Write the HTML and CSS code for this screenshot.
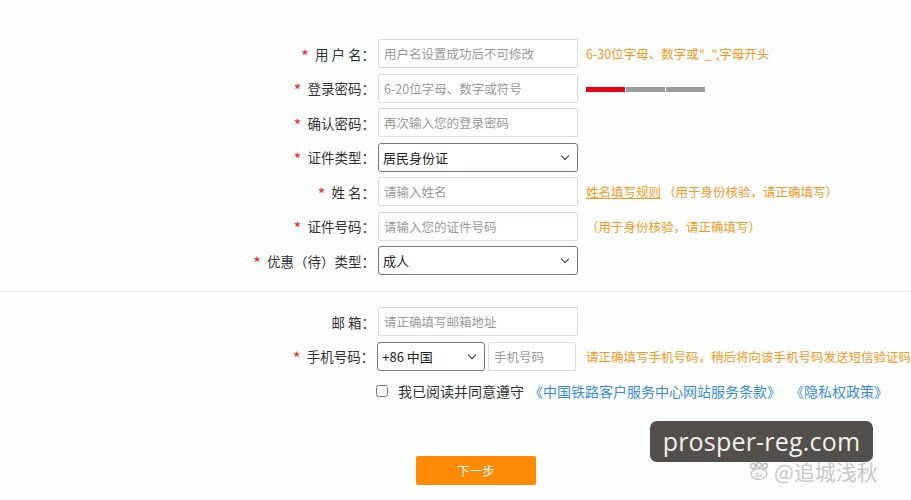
FILE: index.html
```html
<!DOCTYPE html>
<html>
<head>
    <meta charset="utf-8">
    <title>注册</title>
    <link rel="stylesheet" href="styles.css">
</head>
<body>
<div class="page">
    <div class="form-part">
        <div class="form-row">
            <label class="form-label"><span class="req">*</span>用 户 名：</label>
            <input class="form-input" type="text" placeholder="用户名设置成功后不可修改">
            <span class="hint">6-30位字母、数字或"_",字母开头</span>
        </div>
        <div class="form-row">
            <label class="form-label"><span class="req">*</span>登录密码：</label>
            <input class="form-input" type="password" placeholder="6-20位字母、数字或符号">
            <div class="strength">
                <span class="strength-bar on"></span>
                <span class="strength-bar"></span>
                <span class="strength-bar"></span>
            </div>
        </div>
        <div class="form-row">
            <label class="form-label"><span class="req">*</span>确认密码：</label>
            <input class="form-input" type="password" placeholder="再次输入您的登录密码">
        </div>
        <div class="form-row">
            <label class="form-label"><span class="req">*</span>证件类型：</label>
            <div class="select-wrap">
                <select class="form-select">
                    <option>居民身份证</option>
                </select>
            </div>
        </div>
        <div class="form-row">
            <label class="form-label"><span class="req">*</span>姓 名：</label>
            <input class="form-input" type="text" placeholder="请输入姓名">
            <span class="hint"><a class="hint-link" href="#">姓名填写规则</a>（用于身份核验，请正确填写）</span>
        </div>
        <div class="form-row">
            <label class="form-label"><span class="req">*</span>证件号码：</label>
            <input class="form-input" type="text" placeholder="请输入您的证件号码">
            <span class="hint">（用于身份核验，请正确填写）</span>
        </div>
        <div class="form-row">
            <label class="form-label"><span class="req">*</span>优惠（待）类型：</label>
            <div class="select-wrap">
                <select class="form-select">
                    <option>成人</option>
                </select>
            </div>
        </div>
    </div>

    <div class="divider"></div>

    <div class="form-part">
        <div class="form-row">
            <label class="form-label">邮 箱：</label>
            <input class="form-input" type="text" placeholder="请正确填写邮箱地址">
        </div>
        <div class="form-row">
            <label class="form-label"><span class="req">*</span>手机号码：</label>
            <div class="select-wrap select-small">
                <select class="form-select">
                    <option>+86 中国</option>
                </select>
            </div>
            <input class="form-input input-small" type="text" placeholder="手机号码">
            <span class="hint hint-phone">请正确填写手机号码，稍后将向该手机号码发送短信验证码</span>
        </div>
        <div class="agree-row">
            <input class="agree-check" type="checkbox">
            <span class="agree-text">我已阅读并同意遵守</span>
            <a class="agree-link" href="#">《中国铁路客户服务中心网站服务条款》</a>
            <a class="agree-link" href="#">《隐私权政策》</a>
        </div>
    </div>

    <div class="btn-row">
        <button class="next-button">下一步</button>
    </div>

    <div class="watermark">
        <div class="watermark-box">prosper-reg.com</div>
        <div class="watermark-sub">
            <svg width="22" height="18" viewBox="0 0 22 18">
                <circle cx="5" cy="4" r="2.5" fill="none" stroke="#bbb" stroke-width="1.3"/>
                <circle cx="11" cy="2.8" r="2.3" fill="none" stroke="#bbb" stroke-width="1.3"/>
                <circle cx="17" cy="4" r="2.5" fill="none" stroke="#bbb" stroke-width="1.3"/>
                <ellipse cx="11" cy="12" rx="8" ry="5.3" fill="none" stroke="#bbb" stroke-width="1.3"/>
                <text x="6.5" y="14.5" font-size="6.5" fill="#bbb" font-family="Liberation Sans, sans-serif">du</text>
            </svg>
            <span>@追城浅秋</span>
        </div>
    </div>
</div>
</body>
</html>
```

FILE: styles.css
```css
* {
    box-sizing: border-box;
}

body {
    margin: 0;
    background-color: #fdfefe;
    font-family: "Noto Sans CJK SC", "Noto Sans", sans-serif;
    font-size: 13px;
    color: #333;
}

.page {
    position: relative;
    width: 911px;
    height: 500px;
    padding-top: 39px;
    overflow: hidden;
}

.form-part {
    display: flex;
    flex-direction: column;
    gap: 5.5px;
}

.form-row {
    display: flex;
    align-items: center;
    gap: 3px;
    height: 29px;
}

.form-label {
    width: 375px;
    text-align: right;
    font-size: 13.5px;
    color: #333;
    white-space: nowrap;
}

.req {
    position: relative;
    top: 3px;
    margin-right: 6px;
    color: #e4393c;
    font-size: 17px;
    line-height: 1;
}

.form-input {
    width: 200px;
    height: 29px;
    padding: 0 5px;
    border: 1px solid #dcdcdc;
    border-radius: 1px;
    background: #fff;
    font-family: inherit;
    font-size: 12.5px;
    color: #333;
    outline: none;
}

.form-input::placeholder {
    color: #9a9a9a;
}

.select-wrap {
    position: relative;
    width: 200px;
    height: 29px;
}

.select-wrap::after {
    content: "";
    position: absolute;
    right: 10px;
    top: 10px;
    width: 5px;
    height: 5px;
    border-right: 1.6px solid #333;
    border-bottom: 1.6px solid #333;
    transform: rotate(45deg);
    pointer-events: none;
}

.form-select {
    width: 100%;
    height: 100%;
    padding: 0 4px;
    border: 1px solid #767676;
    border-radius: 3px;
    background: #fff;
    font-family: inherit;
    font-size: 13px;
    color: #222;
    -webkit-appearance: none;
    appearance: none;
    outline: none;
}

.select-small {
    width: 108px;
}

.input-small {
    width: 88px;
}

.hint {
    margin-left: 5px;
    font-size: 12.5px;
    color: #f39a1e;
    white-space: nowrap;
}

.hint-phone {
    margin-left: 7px;
}

.hint-link {
    color: #f39a1e;
    text-decoration: underline;
    margin-right: 2px;
}

.strength {
    display: flex;
    gap: 1px;
    margin-left: 5px;
    margin-top: 2px;
}

.strength-bar {
    width: 39px;
    height: 5px;
    background-color: #9b9b9b;
}

.strength-bar.on {
    background-color: #e60012;
}

.divider {
    height: 1px;
    margin: 16px 0 15px;
    background-color: #e2e6e6;
}

.agree-row {
    display: flex;
    align-items: center;
    height: 28px;
    padding-left: 375px;
    margin-top: 1px;
    font-size: 14px;
}

.agree-check {
    width: 12px;
    height: 12px;
    margin: 0 10px 0 1px;
}

.agree-text {
    color: #333;
    margin-right: 5px;
}

.agree-link {
    color: #3b8ad8;
    text-decoration: none;
    margin-right: 9px;
}

.btn-row {
    padding-left: 416px;
    margin-top: 51px;
}

.next-button {
    width: 120px;
    height: 29px;
    border: none;
    border-radius: 2px;
    background-color: #fe8a06;
    color: #fff;
    font-family: inherit;
    font-size: 12.5px;
    cursor: pointer;
}

.watermark {
    position: absolute;
    left: 650px;
    top: 421px;
    width: 250px;
}

.watermark-box {
    width: 223px;
    height: 41px;
    border-radius: 7px;
    background-color: rgba(70, 66, 64, 0.93);
    color: #f3efe9;
    font-family: "Open Sans", sans-serif;
    font-size: 25px;
    line-height: 41px;
    text-align: center;
    letter-spacing: 0.2px;
}

.watermark-sub {
    display: flex;
    align-items: center;
    gap: 4px;
    margin-top: -5px;
    padding-left: 98px;
    color: #c8c8c8;
    font-size: 21px;
    line-height: 28px;
}
```
